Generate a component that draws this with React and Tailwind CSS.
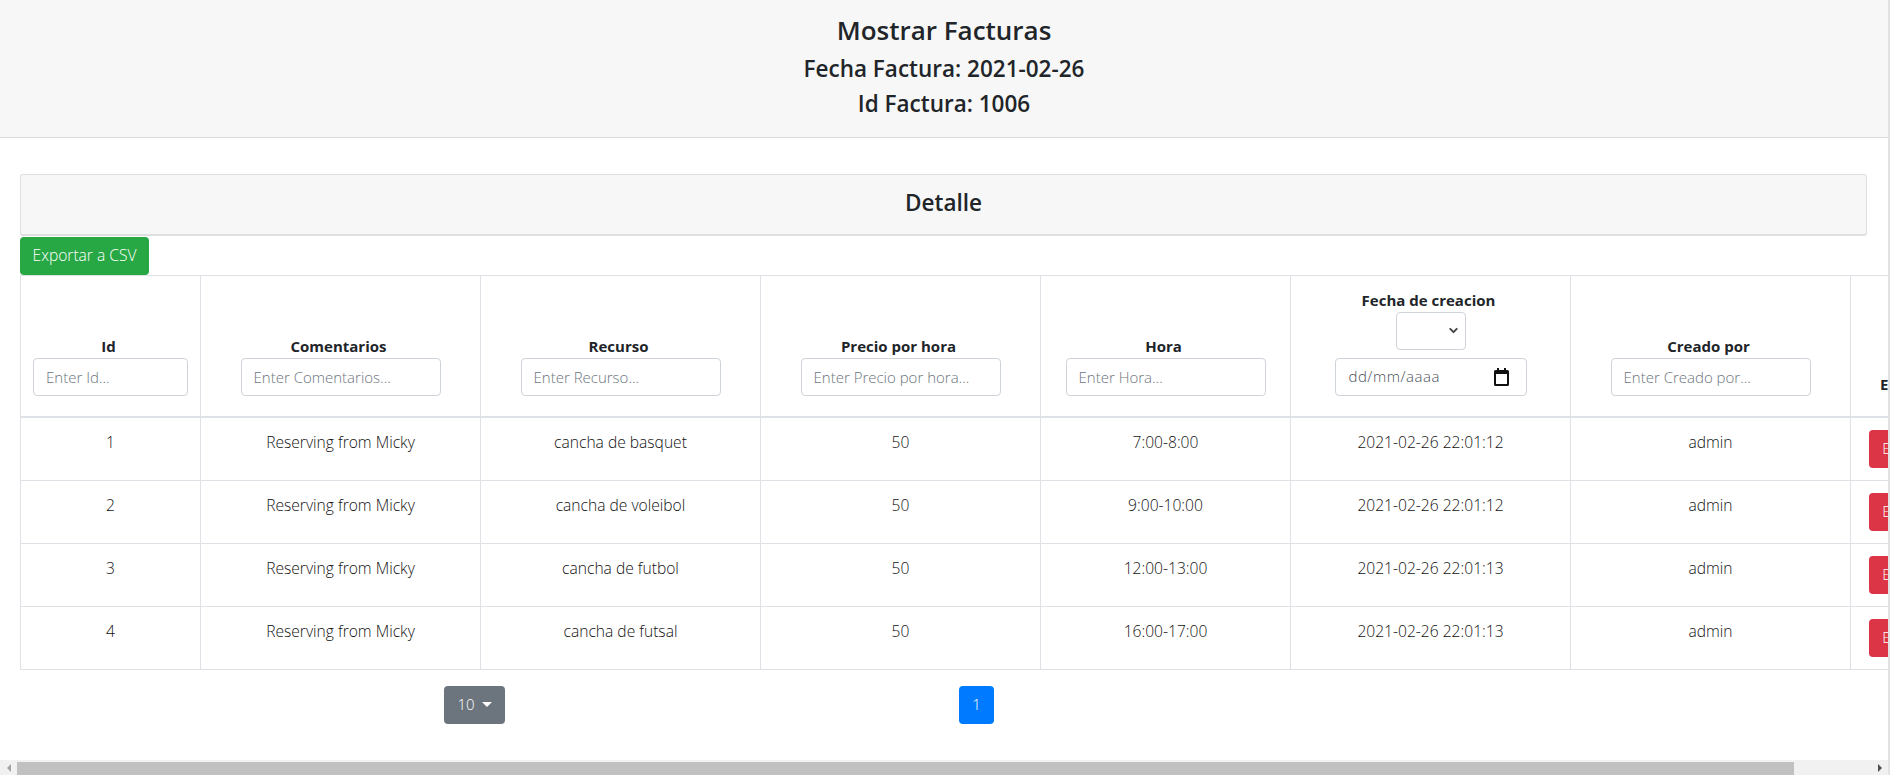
import { ChevronDown } from 'lucide-react';

const columns = [
  { label: 'Id', width: 'w-[180px]', filter: 'Enter Id...', inputWidth: 'w-[155px]' },
  { label: 'Comentarios', width: 'w-[280px]', filter: 'Enter Comentarios...', inputWidth: 'w-[200px]' },
  { label: 'Recurso', width: 'w-[280px]', filter: 'Enter Recurso...', inputWidth: 'w-[200px]' },
  { label: 'Precio por hora', width: 'w-[280px]', filter: 'Enter Precio por hora...', inputWidth: 'w-[200px]' },
  { label: 'Hora', width: 'w-[250px]', filter: 'Enter Hora...', inputWidth: 'w-[200px]' },
  { label: 'Fecha de creacion', width: 'w-[280px]', date: true },
  { label: 'Creado por', width: 'w-[280px]', filter: 'Enter Creado por...', inputWidth: 'w-[200px]' },
  { label: 'Eliminar', width: 'w-[200px]', align: 'left' },
];

const rows = [
  ['1', 'Reserving from Micky', 'cancha de basquet', '50', '7:00-8:00', '2021-02-26 22:01:12', 'admin'],
  ['2', 'Reserving from Micky', 'cancha de voleibol', '50', '9:00-10:00', '2021-02-26 22:01:12', 'admin'],
  ['3', 'Reserving from Micky', 'cancha de futbol', '50', '12:00-13:00', '2021-02-26 22:01:13', 'admin'],
  ['4', 'Reserving from Micky', 'cancha de futsal', '50', '16:00-17:00', '2021-02-26 22:01:13', 'admin'],
];

function CalendarIcon() {
  return (
    <svg width="15" height="18" viewBox="0 0 15 18" className="text-[#111]">
      <path d="M3 0h2v2h5V0h2v2h1.500A1.500 1.500 0 0 1 15 3.500V16.500A1.500 1.500 0 0 1 13.500 18h-12A1.500 1.500 0 0 1 0 16.500V3.500A1.500 1.500 0 0 1 1.500 2H3z M2 6v10h11V6z" fill="currentColor" fillRule="evenodd" />
    </svg>
  );
}

function ColumnFilter({ column }) {
  if (column.date) {
    return (
      <div className="flex flex-col items-center gap-2">
        <div className="flex h-[38px] w-[70px] items-center justify-end rounded border border-[#ced4da] bg-white pr-[5px]">
          <ChevronDown size={13} strokeWidth={3.5} className="text-[#444]" />
        </div>
        <div className="flex h-[38px] w-[192px] items-center justify-between rounded border border-[#ced4da] bg-white pl-[13px] pr-[17px] font-light tracking-[0.5px] text-[#495057]">
          <span>dd/mm/aaaa</span>
          <CalendarIcon />
        </div>
      </div>
    );
  }
  if (!column.filter) return null;
  return (
    <input
      placeholder={column.filter}
      className={`${column.inputWidth} mx-auto block h-[38px] rounded border border-[#ced4da] bg-white px-[12px] font-light placeholder:text-[#6c757d]`}
    />
  );
}

export default function App() {
  return (
    <div className="flex h-[775px] w-[1890px] flex-col overflow-hidden border-r-2 border-[#e2e2e2] bg-white font-['Open_Sans',sans-serif] text-[15px] text-[#212529]">
      <header className="h-[138px] shrink-0 border-b border-[#dcdcdc] bg-[#f7f7f7] pt-[9px] text-center font-semibold">
        <h3 className="h-[42px] text-[26px] leading-[42px]">Mostrar Facturas</h3>
        <h4 className="h-[36px] text-[22.500px] leading-[36px]">Fecha Factura: 2021-02-26</h4>
        <h4 className="h-[36px] text-[22.500px] leading-[34px]">Id Factura: 1006</h4>
      </header>

      <main className="min-h-0 flex-1 overflow-hidden pl-[20px] pt-[36px]">
        <div className="h-[62px] w-[1847px] rounded-[3px] border border-b-2 border-[#dfdfdf] bg-[#f7f7f7] text-center text-[22.500px] font-semibold leading-[56px]">
          Detalle
        </div>
        <button className="mt-px block h-[38px] w-[129px] rounded bg-[#28a745] text-[15.600px] font-light text-white">Exportar a CSV</button>

        <table className="w-[2030px] table-fixed border-collapse">
          <colgroup>
            {columns.map((column) => (
              <col key={column.label} className={column.width} />
            ))}
          </colgroup>
          <thead>
            <tr>
              {columns.map((column) => (
                <th key={column.label} className="h-[141px] border border-b-2 border-[#dee2e6] px-[12px] pb-[20px] pt-[12px] align-bottom font-bold">
                  <div className={column.align === 'left' ? 'pl-[17px] text-left' : 'pr-[4px] text-center'}>{column.label}</div>
                  <ColumnFilter column={column} />
                </th>
              ))}
            </tr>
          </thead>
          <tbody>
            {rows.map((row) => (
              <tr key={row[0]} className="h-[63px]">
                {row.map((value, i) => (
                  <td key={i} className="border border-[#dee2e6] px-[12px] py-[12px] text-center align-top text-[15.600px] font-light leading-6 text-[#111]">
                    {value}
                  </td>
                ))}
                <td className="border border-[#dee2e6] py-[12px] pl-[18px] text-left align-top">
                  <button className="h-[38px] w-[81px] rounded bg-[#dc3545] font-light text-white">Eliminar</button>
                </td>
              </tr>
            ))}
          </tbody>
        </table>

        <div className="mt-[16px] flex h-[38px] font-light">
          <button className="ml-[424px] flex w-[61px] items-center justify-center gap-[7px] rounded bg-[#6c757d] text-white">
            10
            <span className="h-0 w-0 border-x-[5px] border-t-[5px] border-x-transparent border-t-white" />
          </button>
          <button className="ml-[454px] w-[35px] rounded bg-[#007bff] text-white">1</button>
        </div>
      </main>

      <div className="flex h-[15px] shrink-0 items-stretch bg-[#f1f1f1]">
        <div className="flex w-[17px] items-center justify-center">
          <span className="h-0 w-0 border-y-[4px] border-r-[4px] border-y-transparent border-r-[#a3a3a3]" />
        </div>
        <div className="mt-[2px] w-[1777px] bg-[#c1c1c1]" />
        <div className="flex flex-1 items-center justify-end pr-[6px]">
          <span className="h-0 w-0 border-y-[4px] border-l-[4px] border-y-transparent border-l-[#505050]" />
        </div>
      </div>
    </div>
  );
}
